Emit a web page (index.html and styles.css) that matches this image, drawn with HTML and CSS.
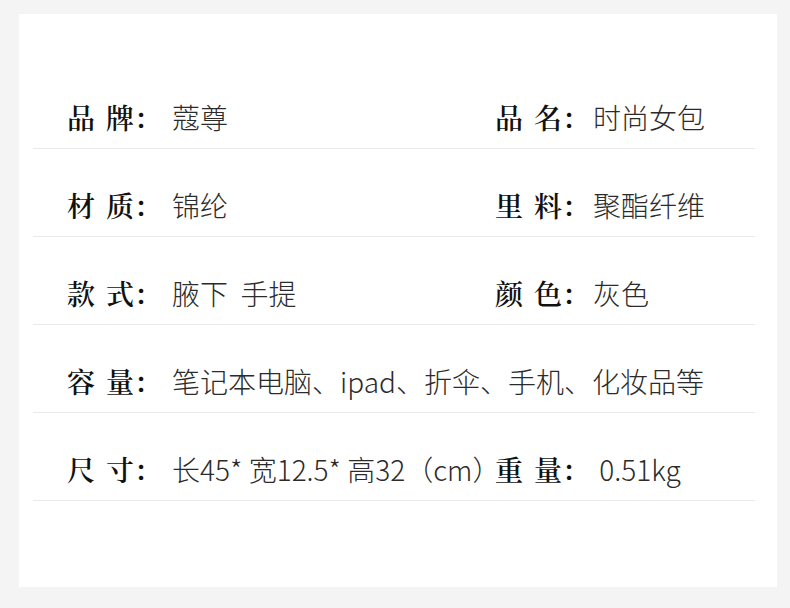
FILE: index.html
```html
<!DOCTYPE html>
<html lang="zh-CN">
<head>
<meta charset="utf-8">
<link rel="stylesheet" href="styles.css">
</head>
<body>
<div class="card">
  <div class="row">
    <div class="cell left"><span class="label">品 牌：</span><span class="value">蔻尊</span></div>
    <div class="cell right"><span class="label">品 名：</span><span class="value">时尚女包</span></div>
  </div>
  <div class="row">
    <div class="cell left"><span class="label">材 质：</span><span class="value">锦纶</span></div>
    <div class="cell right"><span class="label">里 料：</span><span class="value">聚酯纤维</span></div>
  </div>
  <div class="row">
    <div class="cell left"><span class="label">款 式：</span><span class="value">腋下  手提</span></div>
    <div class="cell right"><span class="label">颜 色：</span><span class="value">灰色</span></div>
  </div>
  <div class="row single">
    <div class="cell left"><span class="label">容 量：</span><span class="value">笔记本电脑、ipad、折伞、手机、化妆品等</span></div>
  </div>
  <div class="row">
    <div class="cell left"><span class="label">尺 寸：</span><span class="value">长45* 宽12.5* 高32（cm）</span></div>
    <div class="cell right"><span class="label">重 量：</span><span class="value"> 0.51kg</span></div>
  </div>
</div>
</body>
</html>
```
FILE: styles.css
```css
html, body {
  margin: 0;
  padding: 0;
}
body {
  background: #f4f4f4;
  width: 790px;
  height: 608px;
  overflow: hidden;
  font-family: "Noto Sans CJK SC", sans-serif;
}
.card {
  background: #ffffff;
  margin: 14px 13px 0 19px;
  height: 573px;
  box-sizing: border-box;
  padding: 47px 22px 0 14px;
}
.row {
  display: grid;
  grid-template-columns: 428px 1fr;
  height: 87px;
  border-bottom: 1px solid #e9e9e9;
  padding-left: 34px;
  box-sizing: content-box;
}
.row.single {
  grid-template-columns: 1fr;
}
.cell {
  display: flex;
  align-items: center;
  white-space: pre;
  height: 87px;
  line-height: 36px;
  box-sizing: border-box;
  padding-top: 25px;
}
.label {
  font-family: "Noto Serif CJK SC", "Noto Sans CJK SC", serif;
  font-weight: 600;
  font-size: 28px;
  color: #111111;
  word-spacing: 4px;
}
.value {
  font-family: "Noto Sans CJK SC", sans-serif;
  font-weight: 300;
  font-size: 28px;
  color: #2b2b2b;
}
.left .value {
  margin-left: 10px;
}
.right .value {
  margin-left: 3px;
}
```
